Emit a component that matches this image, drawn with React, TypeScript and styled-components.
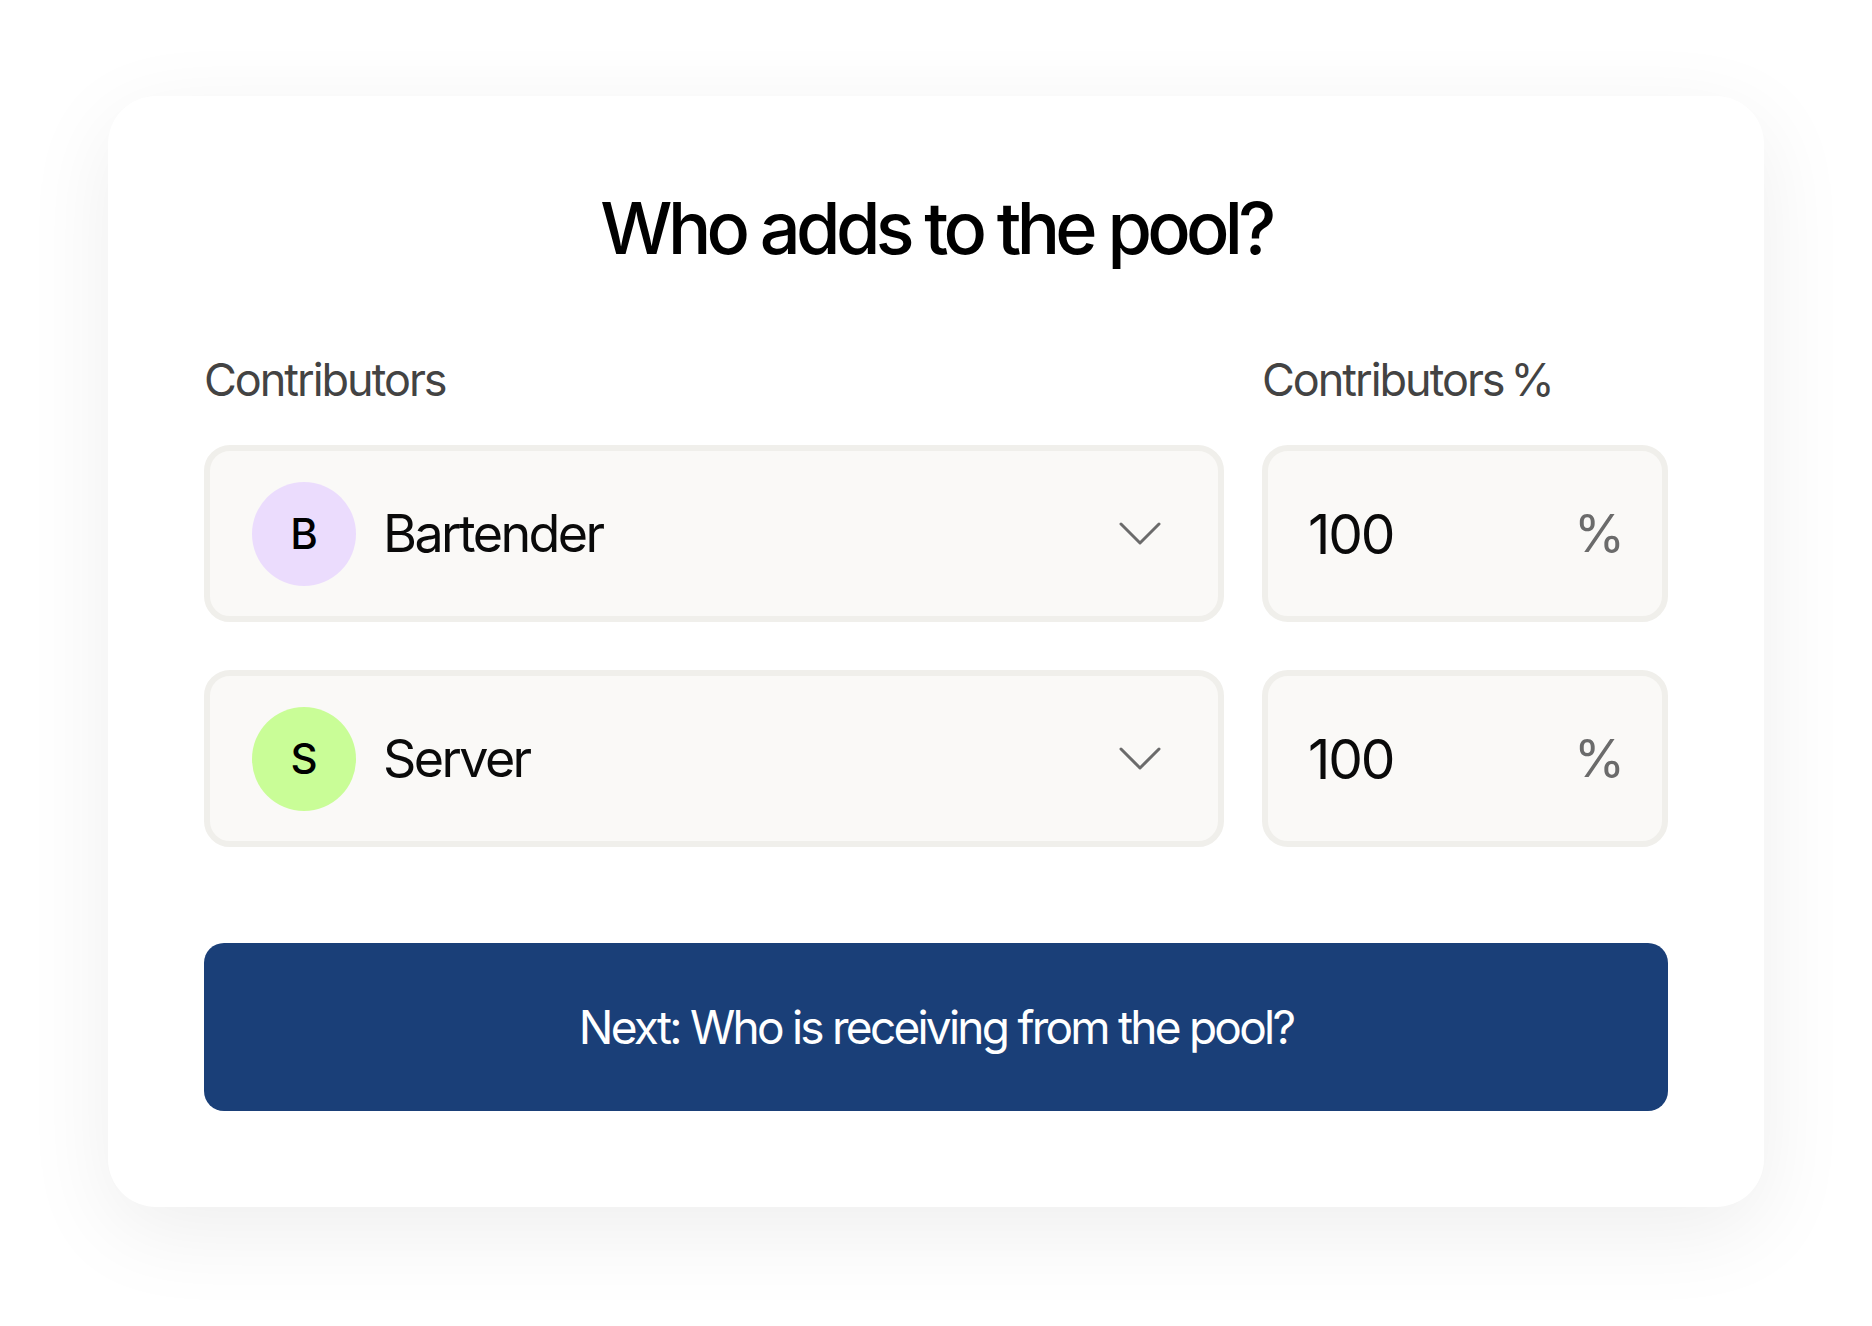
import styled, { createGlobalStyle } from "styled-components";

const GlobalStyle = createGlobalStyle`
  html, body {
    margin: 0;
    padding: 0;
    background: #ffffff;
  }
  body {
    font-family: Inter, "Noto Sans", "Liberation Sans", sans-serif;
    -webkit-font-smoothing: antialiased;
  }
`;

type Contributor = {
  initial: string;
  name: string;
  color: string;
  percent: number;
};

const contributors: Contributor[] = [
  { initial: "B", name: "Bartender", color: "#ebdcfd", percent: 100 },
  { initial: "S", name: "Server", color: "#c9fd97", percent: 100 },
];

function Chevron() {
  return (
    <svg width="42" height="24" viewBox="0 0 42 24" fill="none">
      <polyline
        points="2,2 21,21 40,2"
        stroke="#6b6b6b"
        strokeWidth="3"
        strokeLinecap="round"
        strokeLinejoin="round"
      />
    </svg>
  );
}

export default function App() {
  return (
    <Page>
      <GlobalStyle />
      <Card>
        <Title>Who adds to the pool?</Title>
        <Grid>
          <Label>Contributors</Label>
          <Label>Contributors %</Label>
          {contributors.map((c) => (
            <Row key={c.name}>
              <Select>
                <Avatar $bg={c.color}>{c.initial}</Avatar>
                <Name>{c.name}</Name>
                <ChevronWrap>
                  <Chevron />
                </ChevronWrap>
              </Select>
              <PercentField>
                <Amount>{c.percent}</Amount>
                <Unit>%</Unit>
              </PercentField>
            </Row>
          ))}
        </Grid>
        <NextButton>Next: Who is receiving from the pool?</NextButton>
      </Card>
    </Page>
  );
}

const Page = styled.div`
  min-height: 1326px;
  box-sizing: border-box;
  padding-top: 96px;
  display: flex;
  justify-content: center;
  align-items: flex-start;
`;

const Card = styled.div`
  width: 1656px;
  box-sizing: border-box;
  padding: 89px 96px 96px;
  background: #ffffff;
  border-radius: 48px;
  box-shadow: 0 24px 90px rgba(0, 0, 0, 0.07);
  display: flex;
  flex-direction: column;
`;

const Title = styled.h1`
  margin: 0;
  text-align: center;
  font-size: 72px;
  line-height: 1.2;
  font-weight: 500;
  letter-spacing: -0.065em;
  color: #000000;
`;

const Grid = styled.div`
  margin-top: 82px;
  display: grid;
  grid-template-columns: 1020px 406px;
  column-gap: 38px;
  row-gap: 0;
`;

const Label = styled.div`
  font-size: 45px;
  line-height: 1.2;
  font-weight: 400;
  letter-spacing: -0.045em;
  word-spacing: -0.08em;
  color: #434343;
  margin-bottom: 38px;
`;

const Row = styled.div`
  display: contents;
  & + & > * {
    margin-top: 48px;
  }
`;

const Field = styled.div`
  height: 177px;
  box-sizing: border-box;
  border: 6px solid #f0efeb;
  border-radius: 26px;
  background: #faf9f7;
  display: flex;
  align-items: center;
`;

const Select = styled(Field)`
  padding: 0 57px 0 42px;
`;

const Avatar = styled.div<{ $bg: string }>`
  width: 104px;
  height: 104px;
  border-radius: 50%;
  background: ${(p) => p.$bg};
  display: flex;
  align-items: center;
  justify-content: center;
  font-size: 42px;
  font-weight: 500;
  color: #000000;
  flex-shrink: 0;
`;

const Name = styled.div`
  margin-left: 27px;
  font-size: 52px;
  font-weight: 400;
  letter-spacing: -0.05em;
  color: #0a0a0a;
`;

const ChevronWrap = styled.div`
  margin-left: auto;
  display: flex;
  align-items: center;
`;

const PercentField = styled(Field)`
  padding: 0 37px 0 40px;
  justify-content: space-between;
`;

const Amount = styled.div`
  font-size: 55px;
  font-weight: 400;
  letter-spacing: -0.04em;
  color: #0a0a0a;
`;

const Unit = styled.div`
  font-size: 52px;
  font-weight: 400;
  color: #6b6b6b;
`;

const NextButton = styled.button`
  margin-top: 96px;
  height: 168px;
  width: 100%;
  border: none;
  border-radius: 20px;
  background: #1a3f78;
  color: #ffffff;
  font-family: Inter, "Noto Sans", "Liberation Sans", sans-serif;
  font-size: 46px;
  font-weight: 400;
  letter-spacing: -0.06em;
  cursor: pointer;
`;
